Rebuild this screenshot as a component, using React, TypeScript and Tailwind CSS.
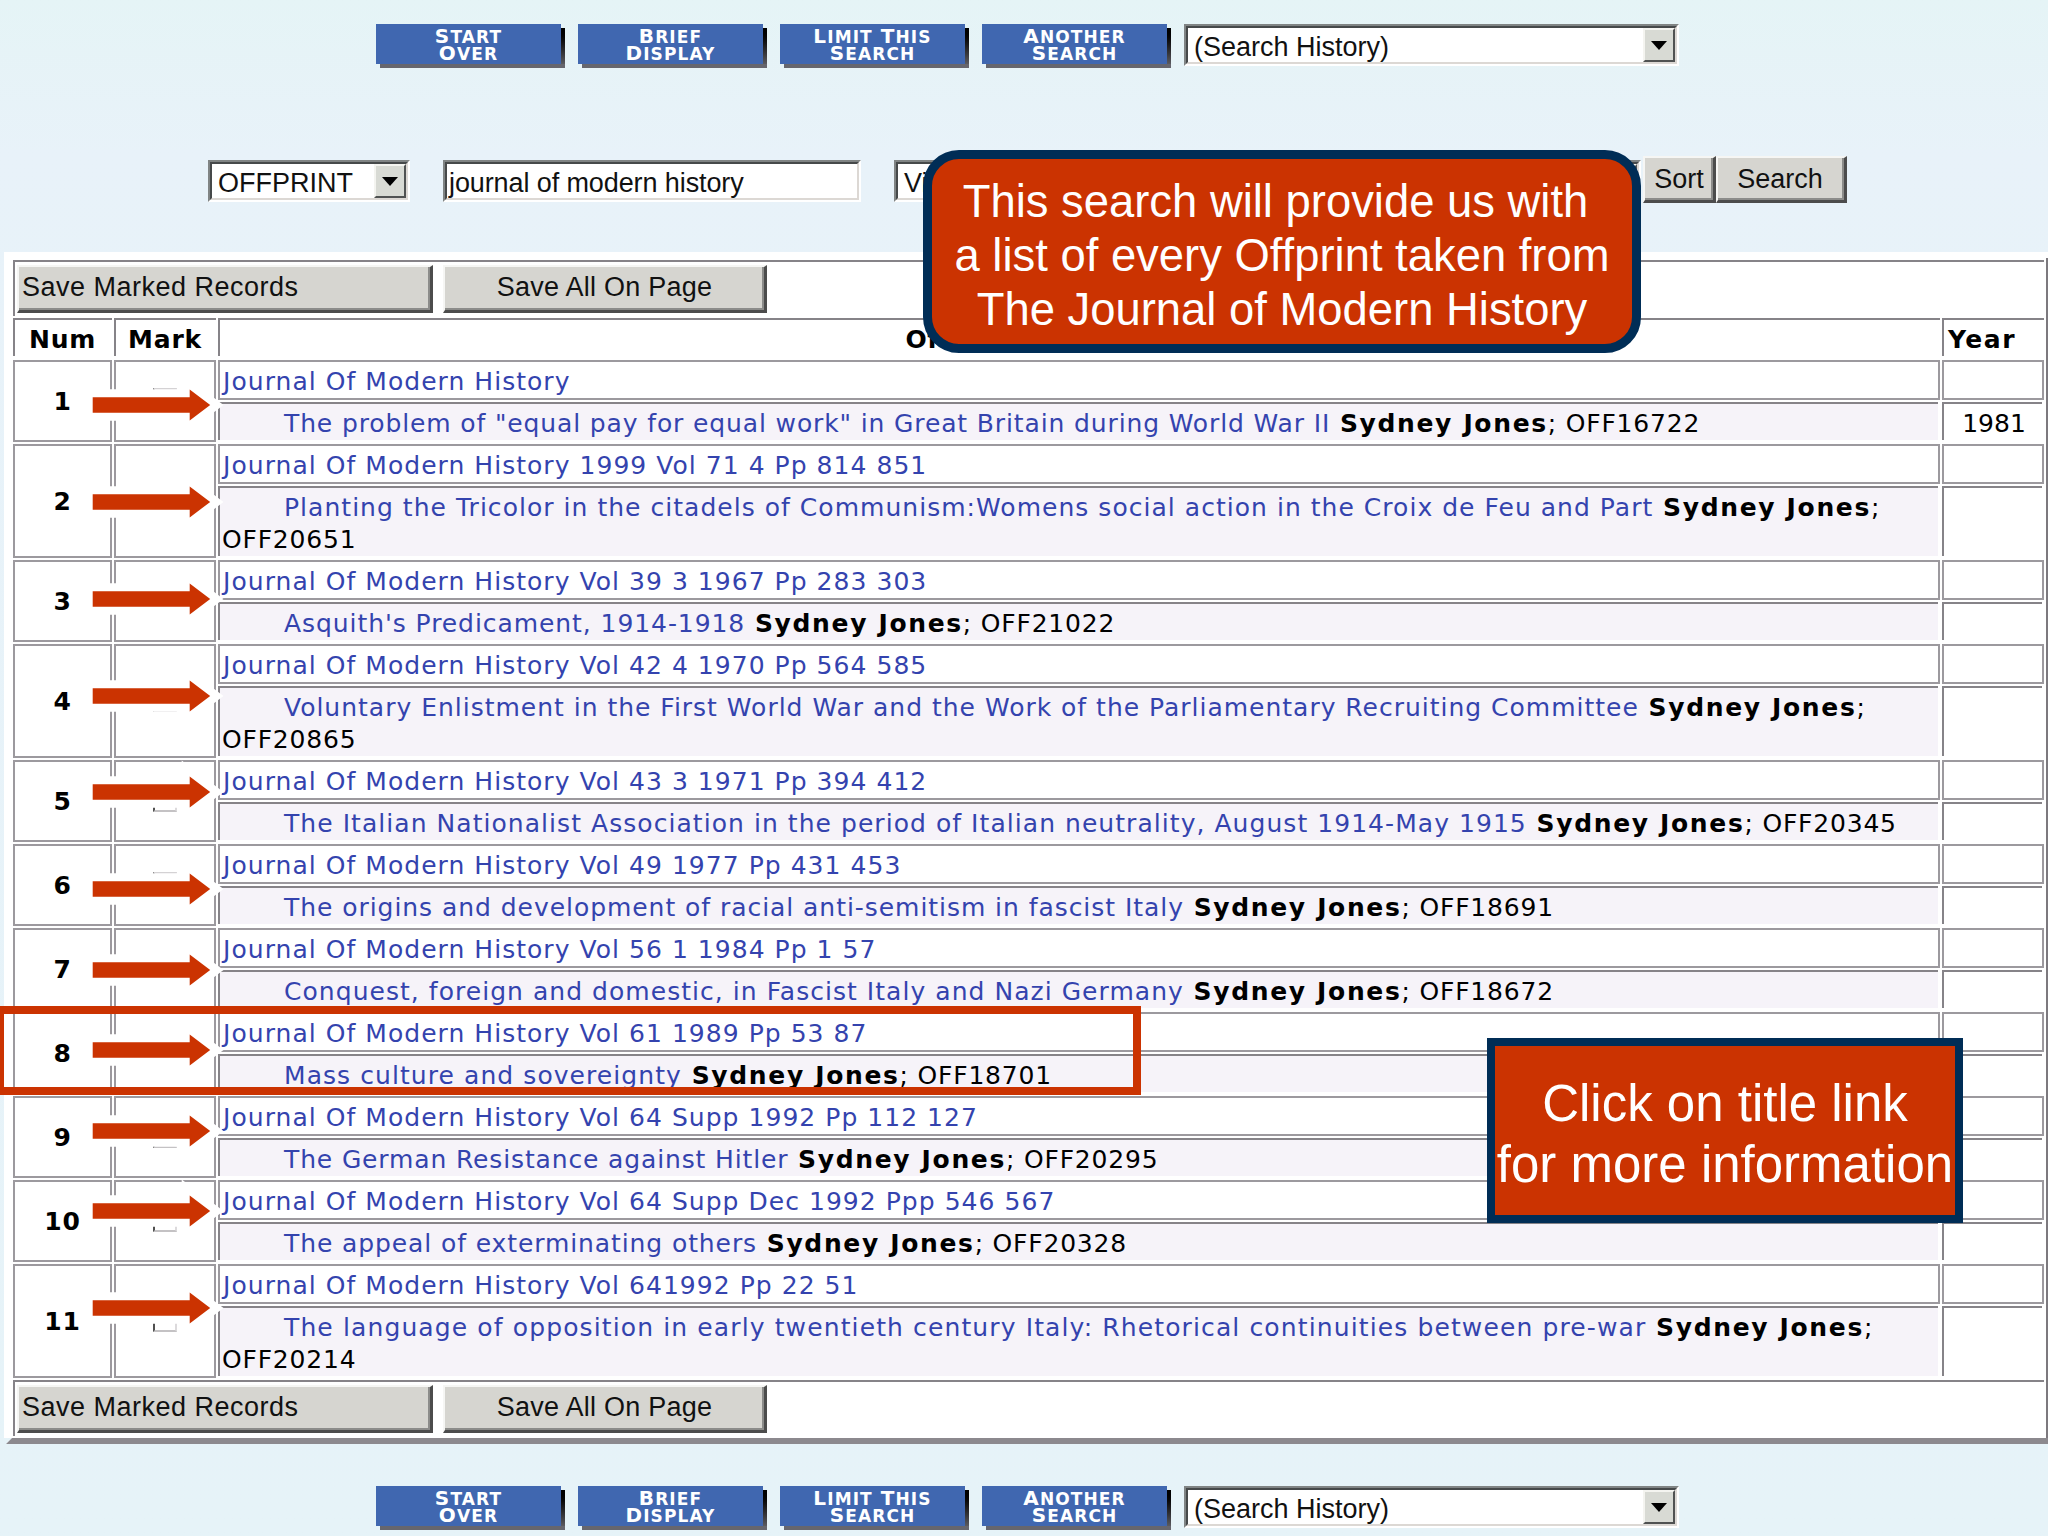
import type { ReactNode } from "react";
import clsx from "clsx";

interface Entry {
  source: string;
  title: string;
  code: string;
  tracking: string;
  year?: string;
  tall?: boolean;
}

const ENTRIES: Entry[] = [
  { source: "Journal Of Modern History", title: 'The problem of "equal pay for equal work" in Great Britain during World War II', code: "OFF16722", tracking: "tracking-[0.87px]", year: "1981" },
  { source: "Journal Of Modern History 1999 Vol 71 4 Pp 814 851", title: "Planting the Tricolor in the citadels of Communism:Womens social action in the Croix de Feu and Part", code: "OFF20651", tracking: "tracking-[1.03px]", tall: true },
  { source: "Journal Of Modern History Vol 39 3 1967 Pp 283 303", title: "Asquith's Predicament, 1914-1918", code: "OFF21022", tracking: "tracking-[0.93px]" },
  { source: "Journal Of Modern History Vol 42 4 1970 Pp 564 585", title: "Voluntary Enlistment in the First World War and the Work of the Parliamentary Recruiting Committee", code: "OFF20865", tracking: "tracking-[0.99px]", tall: true },
  { source: "Journal Of Modern History Vol 43 3 1971 Pp 394 412", title: "The Italian Nationalist Association in the period of Italian neutrality, August 1914-May 1915", code: "OFF20345", tracking: "tracking-[1.05px]" },
  { source: "Journal Of Modern History Vol 49 1977 Pp 431 453", title: "The origins and development of racial anti-semitism in fascist Italy", code: "OFF18691", tracking: "tracking-[0.95px]" },
  { source: "Journal Of Modern History Vol 56 1 1984 Pp 1 57", title: "Conquest, foreign and domestic, in Fascist Italy and Nazi Germany", code: "OFF18672", tracking: "tracking-[1.04px]" },
  { source: "Journal Of Modern History Vol 61 1989 Pp 53 87", title: "Mass culture and sovereignty", code: "OFF18701", tracking: "tracking-[1.07px]" },
  { source: "Journal Of Modern History Vol 64 Supp 1992 Pp 112 127", title: "The German Resistance against Hitler", code: "OFF20295", tracking: "tracking-[0.86px]" },
  { source: "Journal Of Modern History Vol 64 Supp Dec 1992 Ppp 546 567", title: "The appeal of exterminating others", code: "OFF20328", tracking: "tracking-[0.9px]" },
  { source: "Journal Of Modern History Vol 641992 Pp 22 51", title: "The language of opposition in early twentieth century Italy: Rhetorical continuities between pre-war", code: "OFF20214", tracking: "tracking-[1.12px]", tall: true },
];

// vertical centre of each pointer arrow
const ARROWS = [405.3, 502, 598.7, 695.5, 792.3, 889, 969.7, 1050.3, 1131, 1211.3, 1308.3];

const NAV = [
  ["Start", "Over"],
  ["Brief", "Display"],
  ["Limit This", "Search"],
  ["Another", "Search"],
];

const INSET = "border-2 border-t-[#808484] border-l-[#808484] border-r-white border-b-white";
const INSET_INNER = "border-2 border-t-[#46494a] border-l-[#46494a] border-r-[#dcd8d4] border-b-[#dcd8d4]";
const GRID = "grid grid-cols-[99px_102px_1722px_102px] gap-x-[2px]";

function SmallCaps({ text }: { text: string }) {
  return (
    <span className="block whitespace-nowrap">
      {text.split(" ").map((word, i) => (
        <span key={word} className={clsx(i > 0 && "ml-[8px]")}>
          <span className="text-[20px]">{word[0].toUpperCase()}</span>
          {word.slice(1).toUpperCase()}
        </span>
      ))}
    </span>
  );
}

function NavButton({ lines }: { lines: string[] }) {
  return (
    <button className="relative h-[40px] w-[185px] bg-[#4067b0] pt-px text-center font-['DejaVu_Sans'] text-[17px] leading-[16px] font-bold tracking-[1.1px] text-white">
      <span className="absolute top-[4px] -right-[4px] h-[40px] w-[4px] bg-linear-to-b from-black to-[#6a6a70]" />
      <span className="absolute -bottom-[4px] left-[4px] h-[4px] w-[185px] bg-[#66666e]" />
      {lines.map((line) => <SmallCaps key={line} text={line} />)}
    </button>
  );
}

function DropButton() {
  return (
    <span className="flex h-full w-[32px] items-center justify-center border-2 border-t-[#f4f4f0] border-l-[#f4f4f0] border-r-[#505252] border-b-[#505252] bg-[#d8dad4]">
      <svg width="16" height="9" viewBox="0 0 16 9"><path d="M0 0H16L8 9Z" fill="#000" /></svg>
    </span>
  );
}

function Select({ label, className }: { label: string; className: string }) {
  return (
    <div className={clsx("h-[42px]", INSET, className)}>
      <div className={clsx("flex h-full items-center justify-between bg-white", INSET_INNER)}>
        <span className="pt-[3px] pl-[6px] leading-[34px] whitespace-nowrap">{label}</span>
        <DropButton />
      </div>
    </div>
  );
}

function RaisedButton({ children, className }: { children: ReactNode; className: string }) {
  return (
    <button className={clsx("border-r-[3px] border-b-[3px] border-t-2 border-l-2 border-t-[#f6f6f4] border-l-[#f6f6f4] border-r-[#4c4c4c] border-b-[#4c4c4c] bg-[#d6d5d0] whitespace-nowrap shadow-[inset_-2px_-2px_0_#8c8c8a]", className)}>
      {children}
    </button>
  );
}

function NavBar() {
  return (
    <div className="flex pl-[376px]">
      <div className="flex gap-[17px]">
        {NAV.map((lines) => <NavButton key={lines[0]} lines={lines} />)}
      </div>
      <Select label="(Search History)" className="ml-[17px] w-[495px]" />
    </div>
  );
}

function SaveBar() {
  return (
    <div className="ml-[9px] flex h-[56px] w-[2031px] items-start border-t-2 border-l-2 border-[#868388] pt-[3px] pl-[2px]">
      <RaisedButton className="h-[48px] w-[416px] pb-[2px] pl-[3px] text-left tracking-[0.5px]">Save Marked Records</RaisedButton>
      <RaisedButton className="ml-[10px] h-[48px] w-[324px] pb-[2px] tracking-[0.25px]">Save All On Page</RaisedButton>
    </div>
  );
}

function HeaderCell({ children }: { children: ReactNode }) {
  return (
    <div className="h-[38px] border-t-2 border-l-2 border-[#868388] pt-[4px] pr-[2px] text-center leading-[32px] font-bold tracking-[0.8px] whitespace-nowrap">
      {children}
    </div>
  );
}

function EntryRow({ entry, index }: { entry: Entry; index: number }) {
  const height = entry.tall ? "h-[114px]" : "h-[82px]";
  return (
    <div className={clsx(GRID, "mb-[2px]", height)}>
      <div className="flex items-center justify-center border-2 border-[#9c999e] pt-[2px] font-bold tracking-[0.8px]">{index + 1}</div>
      <div className="flex items-center border-2 border-[#9c999e] pb-[3px] pl-[37px]">
        <span className="size-[24px] border-2 border-t-[#d4d2d4] border-r-[#dcdadc] border-b-[#c4c2c4] border-l-[#505050]" />
      </div>
      <div className="flex flex-col gap-[2px]">
        <div className="h-[40px] border-2 border-[#9c999e] pt-[4px] pl-[3px] leading-[32px] tracking-[1.04px] whitespace-nowrap text-[#3443ae]">{entry.source}</div>
        <div className="mr-[2px] mb-[2px] grow border-t-2 border-l-2 border-[#868388] bg-[#f6f3f9] pt-[4px] pl-[2px] leading-[32px] tracking-[0.8px] whitespace-nowrap">
          <span className={clsx("mr-px ml-[62px] text-[#3443ae]", entry.tracking)}>{entry.title}</span> <b className="tracking-[1.65px]">Sydney Jones</b>;{entry.tall ? <br /> : " "}
          {entry.code}
        </div>
      </div>
      <div className="flex flex-col gap-[2px]">
        <div className="h-[40px] border-2 border-[#9c999e]" />
        <div className="mr-[2px] mb-[2px] grow border-t-2 border-l-2 border-[#868388] pt-[4px] pl-[2px] text-center leading-[32px]">{entry.year}</div>
      </div>
    </div>
  );
}

function Arrow({ y }: { y: number }) {
  return (
    <svg className="absolute left-[80px]" style={{ top: y - 40 }} width="150" height="80" viewBox="80 -40 150 80">
      <path d="M92.7 -7.8H189.7V-15.4L210.2 0L189.7 15.4V7.8H92.7Z" fill="#fff" stroke="#fff" strokeWidth="16" />
      <path d="M92.7 -7.8H189.7V-15.4L210.2 0L189.7 15.4V7.8H92.7Z" fill="#cb3301" />
    </svg>
  );
}

export default function App() {
  return (
    <div className="relative h-[1536px] w-[2048px] overflow-hidden bg-linear-to-b from-[#e5f4f6] via-[#e8f2f9] via-10% to-[#e6f3f8] pt-[24px] font-['Liberation_Sans',sans-serif] text-[27px] text-[#111]">
      <NavBar />

      <div className="mt-[90px] flex h-[47px] pl-[208px]">
        <Select label="OFFPRINT" className="mt-[4px] w-[202px]" />
        <div className={clsx("mt-[4px] ml-[33px] h-[42px] w-[418px]", INSET)}>
          <div className={clsx("h-full bg-white pt-[2px] pl-[2px] leading-[34px] tracking-[-0.1px]", INSET_INNER)}>journal of modern history</div>
        </div>
        <Select label="Vi" className="mt-[4px] ml-[33px] w-[747px]" />
        <RaisedButton className="ml-[2px] w-[73px]">Sort</RaisedButton>
        <RaisedButton className="w-[131px] pr-[2px]">Search</RaisedButton>
      </div>

      <div className="mt-[49px] ml-[4px] h-[1192px] border-b-[6px] border-[#8c898e] bg-white pt-[8px] [clip-path:polygon(0_0,100%_0,100%_100%,2px_100%,8px_1186px,0_1186px)]">
        <SaveBar />
        <div className="mt-[2px] ml-[9px] font-['DejaVu_Sans'] text-[25px] text-black">
          <div className={clsx(GRID, "h-[42px]")}>
            <HeaderCell>Num</HeaderCell>
            <HeaderCell>Mark</HeaderCell>
            <HeaderCell><span className="tracking-[0.4px]">Offsite Entry Subsidiary</span></HeaderCell>
            <div className="h-[38px] border-t-2 border-l-2 border-[#868388] pt-[4px] pl-[4px] leading-[32px] font-bold tracking-[1.5px]">Year</div>
          </div>
          {ENTRIES.map((entry, i) => <EntryRow key={entry.code} entry={entry} index={i} />)}
        </div>
        <SaveBar />
      </div>
      <div className="absolute top-[258px] right-0 h-[1180px] w-[2px] bg-[#7c797e]" />

      <div className="mt-[42px]">
        <NavBar />
      </div>

      {ARROWS.map((y) => <Arrow key={y} y={y} />)}
      <div className="absolute top-[1006px] -left-[4px] h-[89px] w-[1145px] border-8 border-[#cb3301]" />
      <div className="absolute top-[150px] left-[923px] h-[203px] w-[718px] rounded-[36px] border-[9px] border-[#002d56] bg-[#cb3301] pt-[16px] text-center text-[45.4px] leading-[54px] whitespace-nowrap text-white">
        <div className="-ml-[13px]">This search will provide us with</div>
        <div>a list of every Offprint taken from</div>
        <div>The Journal of Modern History</div>
      </div>
      <div className="absolute top-[1038px] left-[1487px] flex h-[185px] w-[476px] flex-col items-center border-8 border-[#002d56] bg-[#cb3301] pt-[27px] text-[51px] leading-[61px] whitespace-nowrap text-white">
        <div>Click on title link</div>
        <div>for more information</div>
      </div>
    </div>
  );
}
